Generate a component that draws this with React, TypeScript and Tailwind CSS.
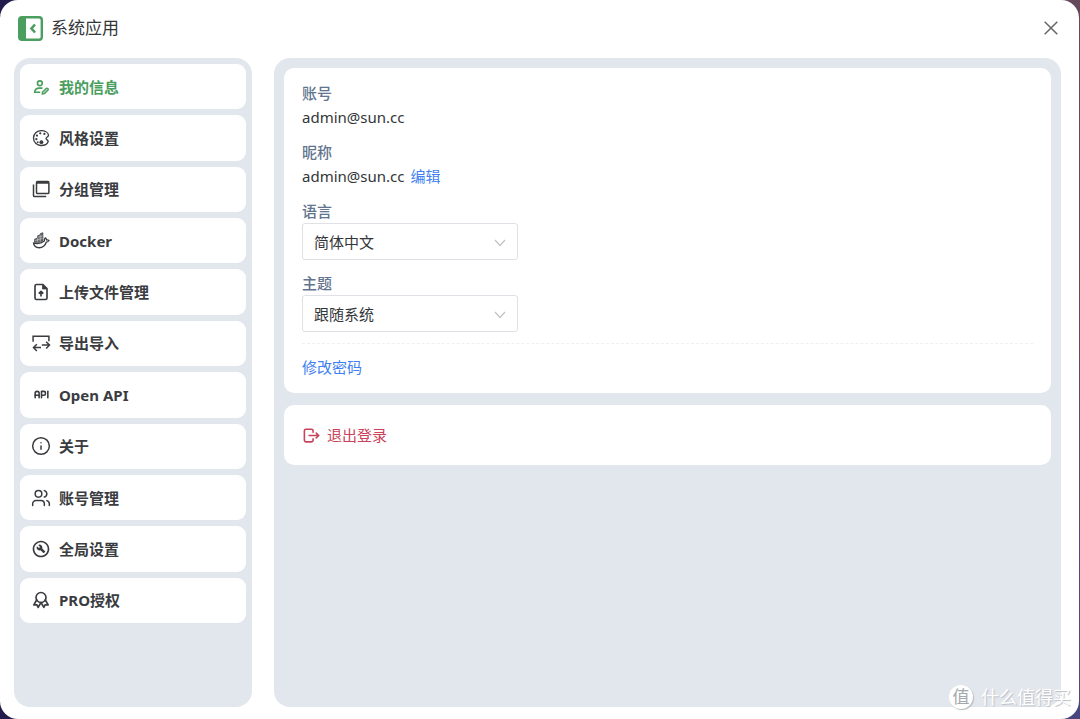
import { useState, type ReactNode } from 'react';
import { MdOutlineBuildCircle } from 'react-icons/md';
import { TbApi, TbAward, TbLogout } from 'react-icons/tb';
import { Info, Users } from 'lucide-react';

function UserEditIcon() {
  return (
    <svg viewBox="0 0 24 24" width="18" height="18" fill="none" stroke="currentColor" strokeWidth="2.2">
      <circle cx="10.5" cy="7" r="3.2" />
      <path d="M14 13.5H9.5C6 13.5 4 15.5 3.5 19H11" strokeLinejoin="round" />
      <path d="M13.5 21.5l.6-3 5-4.8c1.6-.8 3.2.8 2.4 2.4l-5 4.8z" fill="currentColor" fillOpacity="0.45" strokeWidth="1.8" strokeLinejoin="round" />
    </svg>
  );
}

function PaletteIcon() {
  return (
    <svg viewBox="0 0 24 24" width="18" height="18" fill="currentColor">
      <path
        d="M13.5 2.2C7 1.6 2 6 2 12c0 5.500 4.500 10 10 10 4.500 0 8.500-2 9.500-5 .8-2.300-3-2.600-2.800-4.600.2-1.800 3.400-1.800 3.300-4C21.900 5.200 18 2.600 13.500 2.200z"
        fill="none"
        stroke="currentColor"
        strokeWidth="1.800"
      />
      <circle cx="11" cy="5.800" r="1.500" />
      <circle cx="16.500" cy="6.500" r="1.500" />
      <circle cx="6.600" cy="8.800" r="1.500" />
      <circle cx="5.800" cy="13.600" r="1.500" />
      <circle cx="12.500" cy="17.500" r="2.600" />
      <circle cx="7.600" cy="17.600" r="1.200" />
    </svg>
  );
}

function GroupIcon() {
  return (
    <svg viewBox="0 0 24 24" width="18" height="18" fill="none" stroke="currentColor" strokeWidth="2">
      <rect x="6" y="2" width="16.5" height="16" rx="1.5" />
      <path d="M6 3.5h16.5" strokeWidth="3" />
      <path d="M2 6v14.5a1.5 1.5 0 0 0 1.5 1.5H19" />
    </svg>
  );
}

function DockerIcon() {
  return (
    <svg viewBox="0 0 24 24" width="18" height="18" fill="none" stroke="currentColor" strokeWidth="1.8" strokeLinejoin="round">
      <path d="M2 14.5c5 1.500 10.500.5 14.500-2.500-.3-1.800.2-3.200 1.300-4.200 1 .7 1.600 1.700 1.700 2.800 1.200-.2 2.300 0 3.200.7-.8 1.400-2 2-3.500 2.100C17.500 18.500 14 21 9.500 21 5 21 2.500 18.500 2 14.500z" />
      <path d="M3.500 9.500l4-1.500V5l3.500-1.200V2.200L14.500 1v10.500c-3.500 2-7 2.500-11 2z" fill="currentColor" fillOpacity="0.75" strokeWidth="1" />
      <path d="M7.500 8v6M11 4v9.500M4 11.500l10.500-3.200M7.500 7l7-2" stroke="#fff" strokeWidth="0.5" />
    </svg>
  );
}

function FileUploadIcon() {
  return (
    <svg viewBox="0 0 24 24" width="18" height="18" fill="none" stroke="currentColor" strokeWidth="2.2" strokeLinejoin="round">
      <path d="M14.5 2H6a2 2 0 0 0-2 2v16a2 2 0 0 0 2 2h12a2 2 0 0 0 2-2V7.5z" />
      <path d="M14 2v6h6z" fill="currentColor" strokeWidth="1" />
      <path d="M12 18v-6M9 14.2l3-3 3 3" />
    </svg>
  );
}

function TransferIcon() {
  return (
    <svg viewBox="0 0 24 24" width="20" height="20" fill="none" stroke="currentColor" strokeWidth="1.8">
      <path d="M2.5 10.5V4h19v6" />
      <path d="M13 14.5h9M18.2 10.5l4 4-4 4" />
      <path d="M12 17.5H3M7 13.5l-4 4 4 4" />
    </svg>
  );
}

const menu: { label: string; icon: ReactNode }[] = [
  { label: '我的信息', icon: <UserEditIcon /> },
  { label: '风格设置', icon: <PaletteIcon /> },
  { label: '分组管理', icon: <GroupIcon /> },
  { label: 'Docker', icon: <DockerIcon /> },
  { label: '上传文件管理', icon: <FileUploadIcon /> },
  { label: '导出导入', icon: <TransferIcon /> },
  { label: 'Open API', icon: <TbApi size={19} strokeWidth={2} /> },
  { label: '关于', icon: <Info size={20} strokeWidth={1.8} /> },
  { label: '账号管理', icon: <Users size={20} strokeWidth={1.8} /> },
  { label: '全局设置', icon: <MdOutlineBuildCircle size={20} /> },
  { label: 'PRO授权', icon: <TbAward size={20} /> },
];

function SelectField({ id, label, options }: { id: string; label: string; options: string[] }) {
  return (
    <div>
      <label htmlFor={id} className="block font-medium text-slate-500">
        {label}
      </label>
      <div className="relative w-[216px]">
        <select
          id={id}
          className="block h-[37px] w-full appearance-none rounded-[3px] border border-[#e0e0e6] bg-white pr-8 pl-[11px] text-[#333639] outline-none"
        >
          {options.map((option) => (
            <option key={option}>{option}</option>
          ))}
        </select>
        <svg
          viewBox="0 0 16 16"
          className="pointer-events-none absolute top-3 right-2.5 h-4 w-4 text-[#c2c2c2]"
          fill="none"
          stroke="currentColor"
          strokeWidth="1.2"
        >
          <path d="M3 5l5 5.5L13 5" />
        </svg>
      </div>
    </div>
  );
}

export default function App() {
  const [active, setActive] = useState('我的信息');

  return (
    <div className="min-h-screen bg-[conic-gradient(at_50%_50%,#664a5c_0deg,#664a5c_80deg,#4a4a82_120deg,#221c4c_180deg,#221c4c_315deg,#664a5c_360deg)] pr-px font-['Noto_Sans','Noto_Sans_CJK_SC',sans-serif] text-[15px] leading-6 text-[#333639]">
      <div className="relative flex min-h-screen flex-col rounded-[18px] bg-white pr-[18px] pb-3 pl-3.5">
        {/* Title bar */}
        <header className="flex h-[58px] items-center justify-between pb-0.5 pl-1">
          <div className="flex items-center gap-2">
            <svg viewBox="0 0 25 25" className="h-[25px] w-[25px] text-[#4a9e5e]" fill="none">
              <rect x="1.2" y="1.2" width="22.600" height="22.600" rx="2.800" stroke="currentColor" strokeWidth="2.400" />
              <path d="M1 3a2 2 0 0 1 2-2h5v23H3a2 2 0 0 1-2-2z" fill="currentColor" />
              <path d="M17 8.5l-3.5 4 3.5 4" stroke="currentColor" strokeWidth="2.6" />
            </svg>
            <h1 className="text-[17px]">系统应用</h1>
          </div>
          <button type="button" aria-label="关闭" className="flex h-5 w-5 items-center justify-center text-[#666]">
            <svg viewBox="0 0 14 14" width="14" height="14" fill="none" stroke="currentColor" strokeWidth="1.5">
              <path d="M.7.7l12.6 12.6M13.3.7L.7 13.3" />
            </svg>
          </button>
        </header>

        <div className="flex flex-1 gap-[22px]">
          {/* Sidebar */}
          <nav className="w-[238px] shrink-0 rounded-2xl bg-[#e2e7ee] p-1.5">
            <ul className="grid min-h-[559px] auto-rows-fr gap-1.5">
              {menu.map((item) => (
                <li key={item.label} className="flex">
                  <button
                    type="button"
                    onClick={() => setActive(item.label)}
                    className={`flex w-full items-center gap-2 rounded-[9px] bg-white pl-[11px] text-left font-bold ${
                      active === item.label ? 'text-[#4a9e5e]' : 'text-[#3a3c3f]'
                    }`}
                  >
                    <span className="flex w-5 justify-center">{item.icon}</span>
                    {item.label}
                  </button>
                </li>
              ))}
            </ul>
          </nav>

          {/* Content */}
          <main className="flex flex-1 flex-col gap-3 rounded-2xl bg-[#e2e7ee] p-2.5">
            <section className="flex flex-col gap-[11px] rounded-[10px] bg-white px-[18px] pt-[13px] pb-3.5">
              <div>
                <div className="font-medium text-slate-500">账号</div>
                <div>admin@sun.cc</div>
              </div>
              <div>
                <div className="font-medium text-slate-500">昵称</div>
                <div className="flex gap-1.5">
                  <span>admin@sun.cc</span>
                  <button type="button" className="text-[#4080f0]">
                    编辑
                  </button>
                </div>
              </div>
              <SelectField id="language" label="语言" options={['简体中文', 'English']} />
              <SelectField id="theme" label="主题" options={['跟随系统', '浅色', '深色']} />
              <hr className="border-t border-dashed border-[#efeff5]" />
              <button type="button" className="self-start text-[#4080f0]">
                修改密码
              </button>
            </section>

            <section className="flex h-[60px] items-center rounded-[10px] bg-white px-[18px]">
              <button type="button" className="flex items-center gap-1.5 text-[#c9415a]">
                <TbLogout size={19} />
                退出登录
              </button>
            </section>
          </main>
        </div>

        {/* Watermark */}
        <div className="pointer-events-none absolute right-2 bottom-2.5 flex items-center gap-2 text-white">
          <span className="flex h-6 w-6 items-center justify-center rounded-full bg-white text-[17px] text-[#a3a7ae] shadow-[1px_1px_1px_#b5b9c0]">
            值
          </span>
          <span className="text-[18px] [text-shadow:1px_1px_1px_#b9bdc4]">什么值得买</span>
        </div>
      </div>
    </div>
  );
}
